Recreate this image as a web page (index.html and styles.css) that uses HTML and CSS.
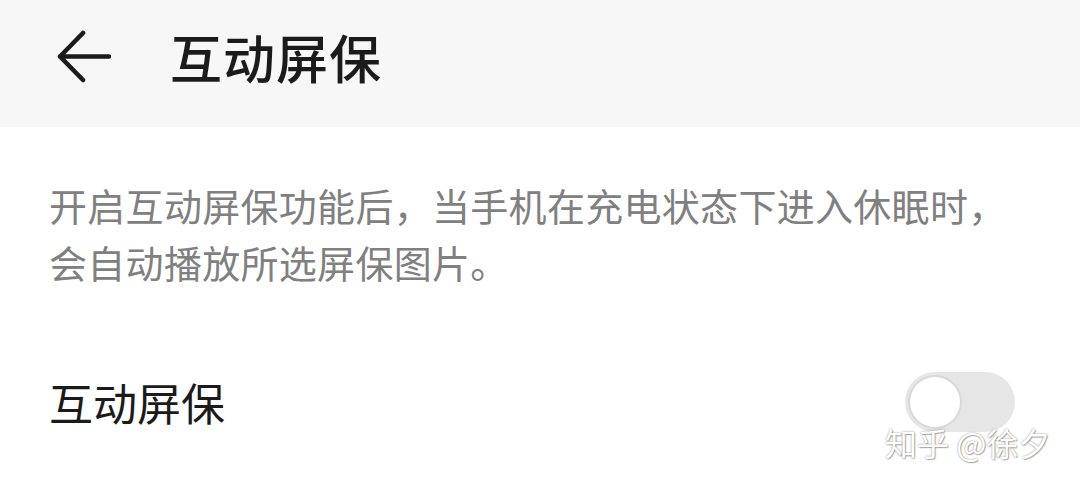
FILE: index.html
```html
<!DOCTYPE html>
<html lang="zh-CN">
<head>
<meta charset="utf-8">
<title>互动屏保</title>
<link rel="stylesheet" href="styles.css">
</head>
<body>
<header class="topbar">
  <svg class="back" viewBox="0 0 54 54" width="54" height="54" aria-hidden="true">
    <path d="M26 3 L3 26.5 L26 50 M3 26.5 L52 26.5" fill="none" stroke="#1b1b1b" stroke-width="4.6" stroke-linecap="round" stroke-linejoin="round"/>
  </svg>
  <h1 class="title">互动屏保</h1>
</header>
<main class="content">
  <p class="desc">开启互动屏保功能后，当手机在充电状态下进入休眠时，<br>会自动播放所选屏保图片。</p>
  <div class="row">
    <span class="row-label">互动屏保</span>
    <span class="switch"><span class="knob"></span></span>
  </div>
</main>
<div class="mark">知乎 @徐夕</div>
</body>
</html>
```
FILE: styles.css
```css
html, body {
  margin: 0;
  padding: 0;
  background: #ffffff;
  font-family: "Noto Sans CJK SC", "Noto Sans", sans-serif;
}
body {
  width: 1080px;
  height: 490px;
  overflow: hidden;
  position: relative;
}
.topbar {
  height: 127px;
  background: #f7f7f7;
  display: flex;
  align-items: center;
  box-sizing: border-box;
  padding: 0 0 14px 57px;
}
.back {
  display: block;
  flex: none;
}
.title {
  margin: 0 0 0 59px;
  font-size: 52px;
  line-height: 1;
  font-weight: 500;
  color: #1b1b1b;
  letter-spacing: 1px;
}
.content {
  padding: 0 0 0 49px;
}
.desc {
  margin: 0;
  padding-top: 49px;
  font-size: 38px;
  line-height: 57px;
  color: #808080;
  letter-spacing: 0.3px;
}
.row {
  display: flex;
  align-items: center;
  justify-content: space-between;
  margin-top: 82px;
  padding-right: 65px;
}
.row-label {
  font-size: 44px;
  line-height: 1;
  color: #1b1b1b;
}
.switch {
  width: 110px;
  height: 60px;
  border-radius: 30px;
  background: #e6e6e6;
  display: flex;
  align-items: center;
  padding-left: 5px;
  box-sizing: border-box;
}
.knob {
  width: 50px;
  height: 50px;
  border-radius: 50%;
  background: #ffffff;
  box-shadow: 0 0 0 2px #d9d9d9;
}
.mark {
  position: absolute;
  left: 885px;
  top: 422px;
  font-size: 32px;
  line-height: 40px;
  color: #ffffff;
  text-shadow: 0 0 2px rgba(0,0,0,0.45), 1px 1px 1px rgba(0,0,0,0.25);
  white-space: nowrap;
}
```
